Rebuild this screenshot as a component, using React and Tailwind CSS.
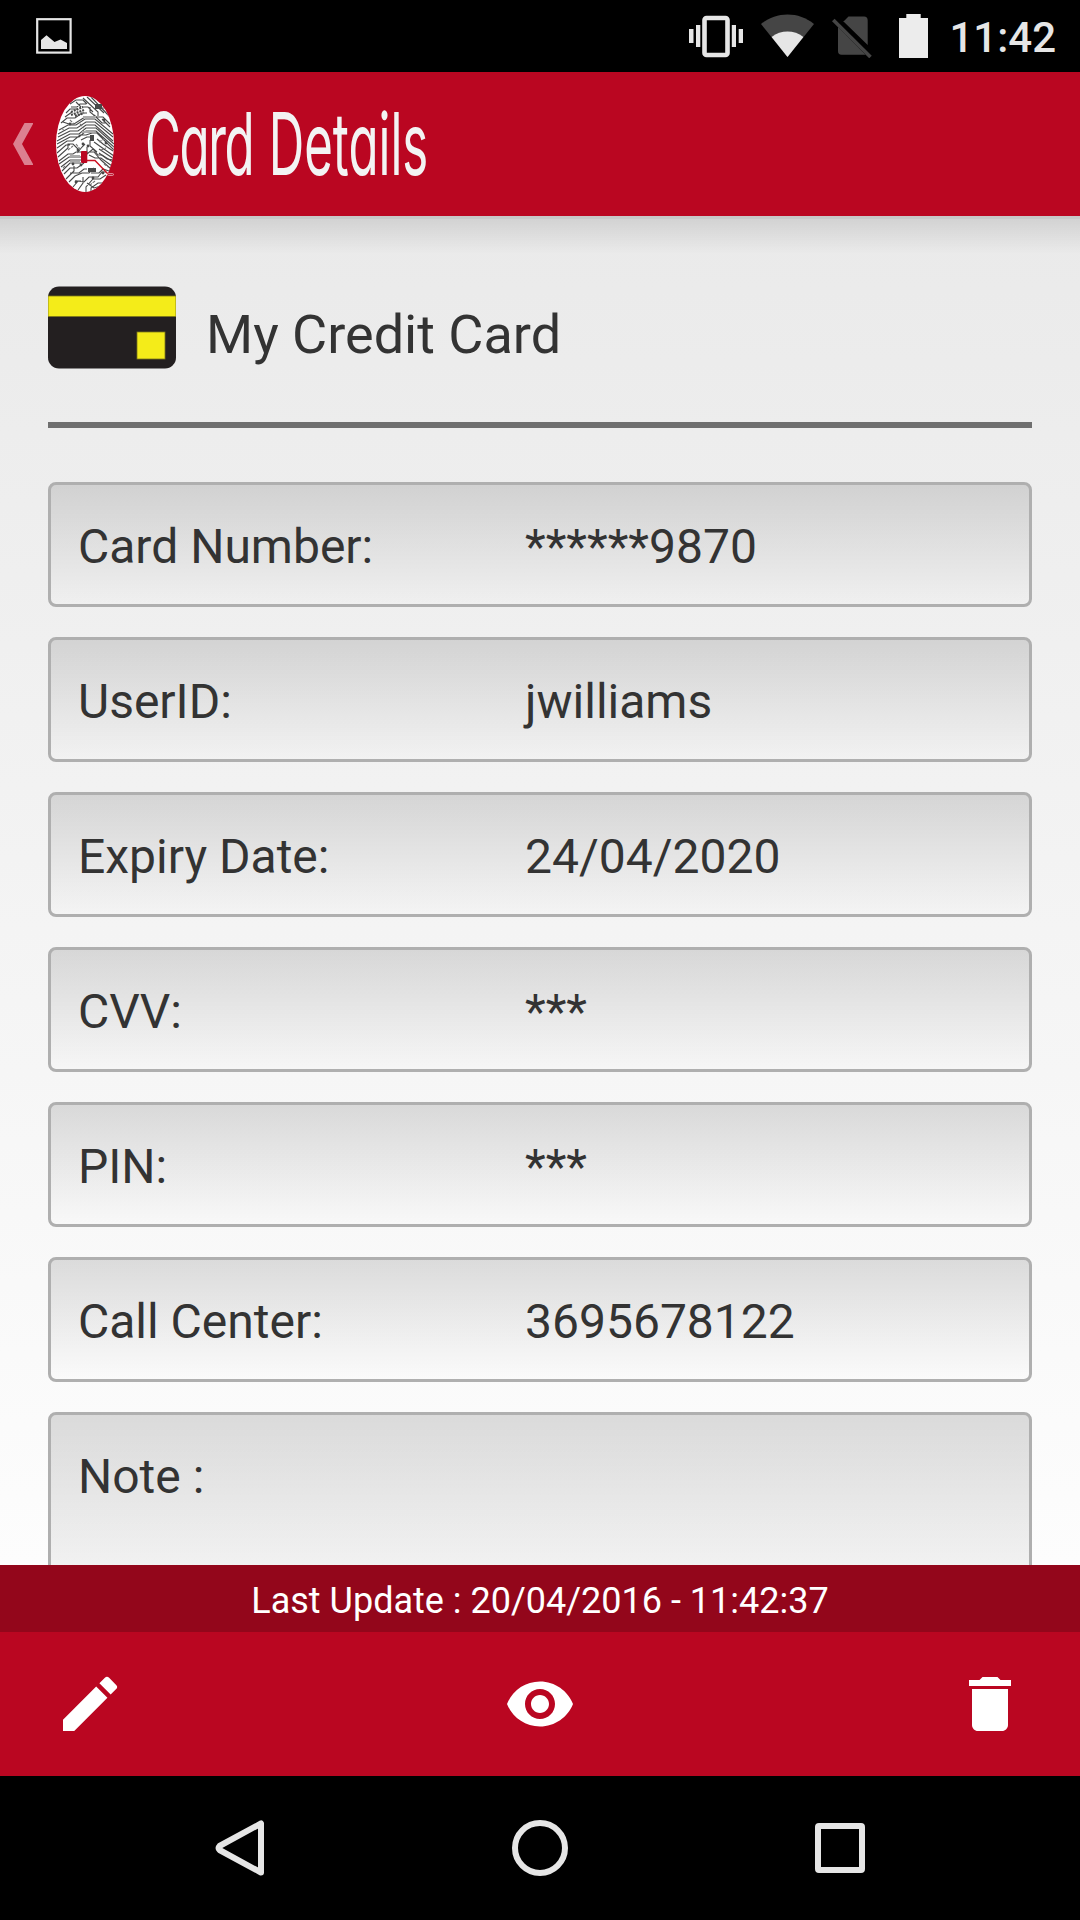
import React from "react";
import { MdEdit, MdVisibility, MdDelete } from "react-icons/md";

const fields = [
  { label: "Card Number:", value: "******9870" },
  { label: "UserID:", value: "jwilliams" },
  { label: "Expiry Date:", value: "24/04/2020" },
  { label: "CVV:", value: "***" },
  { label: "PIN:", value: "***" },
  { label: "Call Center:", value: "3695678122" },
];

function StatusBar() {
  return (
    <div className="h-[72px] shrink-0 bg-black flex items-center justify-between pl-9 pr-[24px]">
      <svg width="36" height="36" viewBox="0 0 36 36">
        <rect x="1.2" y="1.2" width="33.4" height="33.4" fill="none" stroke="#e6e6e6" strokeWidth="2.2" />
        <path d="M5 31V22L10.5 17.3L18.5 24L24.5 21.5L31 25V31Z" fill="#e6e6e6" />
      </svg>
      <div className="flex items-center">
        {/* vibrate */}
        <svg width="54" height="44" viewBox="0 0 54 44">
          <rect x="15.5" y="4" width="23" height="37" rx="2" fill="none" stroke="#e6e6e6" strokeWidth="4.6" />
          <path d="M0 15h4.5v14H0zM7 11h4.3v22H7zM42.8 11H47v22h-4.2zM49.7 15H54v14h-4.3z" fill="#e6e6e6" />
        </svg>
        {/* wifi */}
        <svg className="ml-[18px]" width="53" height="44" viewBox="0 0 53 44">
          <path d="M0 10C7.5 3.8 17 0.5 26.5 0.5S45.5 3.8 53 10L26.5 43Z" fill="#454545" />
          <path d="M10.6 23C20 15.8 33 15.8 42.4 23L26.5 43Z" fill="#e6e6e6" />
        </svg>
        {/* no sim */}
        <svg className="ml-[18px]" width="40" height="44" viewBox="0 0 40 44">
          <path d="M11 8L16.5 2.5H32Q35.7 2.5 35.7 6.5V31L11 7ZM6 13L33.5 40.8H9.5Q6 40.8 6 37Z" fill="#454545" />
          <path d="M1.3 6L38.5 43" stroke="#454545" strokeWidth="3.6" />
        </svg>
        {/* battery */}
        <svg className="ml-[27px]" width="29" height="44" viewBox="0 0 29 44">
          <path d="M7.3 0h14.4v4H29v40H0V4h7.3z" fill="#ececec" />
        </svg>
        <span className="ml-[21px] pt-[3px] text-[42px] leading-[69px] font-medium text-[#e6e6e6]">
          11:42
        </span>
      </div>
    </div>
  );
}

function FingerprintLogo() {
  return (
    <svg width="60" height="98" viewBox="0 0 60 98">
      <defs>
        <clipPath id="print">
          <ellipse cx="29" cy="49" rx="29" ry="48" />
        </clipPath>
      </defs>
      <ellipse cx="29" cy="49" rx="29" ry="48" fill="#fff" />
      <g clipPath="url(#print)" fill="none" stroke="#484848" strokeWidth="1.1">
        {/* top traces */}
        <path d="M14 9L20 5H27L31 9M15 12H21L24 9H30M27 3L42 17V21M31 2L48 18M35 2L54 22M10 18L14 14H22M20 7L25 12M26 12H32L37 17M9 22L16 17M34 12V17L40 22H47L54 29" />
        <path d="M5 28L11 23H19L26 18H31M7 27L13 29H18L29 22M38 20L46 28H50M43 13H49M46 24L54 32" />
        {/* ridges */}
        <path d="M3 35L12 30H20L29 24H39L57 39M2 39L13 33H21L30 27H39L57 42M2 42L14 36H22L30 30H39L57 46M1 46L14 39H23L30 33H40L58 49M1 49L14 42H23L30 36H40L58 52M1 53L11 46H17L24 40H30L36 38H41L58 55" />
        <path d="M1 58L10 50H14M2 62L12 53V49H17L22 54V57L26 52L29 49M25 45L31 42H35M38 47L45 52L58 61M41 44L47 49L57 56M34 45V51L41 57M31 52V59L37 54L42 60H46L57 67M43 54L58 64" />
        <path d="M3 66L12 59H17L20 57H26M3 69L13 62H25M5 72L14 65H25M6 76L14 68H25M33 60L39 63H45L56 71M34 57H38L45 65L55 74M43 58L51 64L58 65" />
        {/* lower traces */}
        <path d="M8 79L14 73H21L28 68M10 84L18 76V71M14 78H23L28 74H31M13 87L19 81L26 78H33L38 73M17 92L22 86L28 87L33 82H42L46 77H50M22 95L27 88V82M30 97V92L37 84H44L50 80M35 97V93L42 88H47M31 88L38 93L45 91M19 86H25M35 78H43L47 74L53 76" />
        <path d="M6 33L8 36M14 25L18 29M24 29L28 33M42 34L47 39M12 55L17 51M20 49L24 54M45 55L50 53M43 47L48 44M7 73L10 70M39 86L34 90M48 69L52 72" stroke="#777" strokeDasharray="3 1" />
        <path d="M15 17L27 12M15 20L28 15M19 21L28 18" strokeWidth="2.2" strokeDasharray="2 1" />
        <path d="M27 22H40M26 37H38M14 61H24M14 67H24" stroke="#aaa" strokeWidth="2" />
      </g>
      <g fill="#484848">
        <path d="M39 9h7v5h-7zM34 40h4v6h-4zM32 73h8v4h-8z" />
        <circle cx="22" cy="55" r="1.4" />
        <circle cx="27" cy="49" r="1.4" />
        <circle cx="14" cy="29" r="1.4" />
        <circle cx="48" cy="25" r="1.4" />
        <circle cx="20" cy="87" r="1.4" />
        <circle cx="37" cy="83" r="1.4" />
        <circle cx="47" cy="78" r="1.4" />
        <circle cx="17" cy="69" r="1.4" />
        <circle cx="25" cy="70" r="1.4" />
        <circle cx="32" cy="51" r="1.4" />
        <circle cx="50" cy="48" r="1.4" />
      </g>
      <rect x="25" y="56" width="6.3" height="12" rx="1" fill="#ba0621" />
      <path d="M31 65.5H39L52 79" fill="none" stroke="#cc1020" strokeWidth="1.4" />
      <rect x="51.5" y="78.6" width="6" height="1.8" rx="0.9" fill="#ba0621" stroke="#eebcc4" strokeWidth="0.8" />
    </svg>
  );
}

function Header() {
  return (
    <div className="h-36 shrink-0 bg-[#ba0621] flex items-center pl-[13px]">
      <svg width="20" height="42" viewBox="0 0 20 42">
        <path d="M11.5 0H20.5L9 21L20.5 42H11.5L0 21Z" fill="#dc8090" />
      </svg>
      <div className="ml-[23px]">
        <FingerprintLogo />
      </div>
      <h1 className="ml-[29px] w-[300px] origin-left scale-x-[0.565] whitespace-nowrap text-[87px] leading-[144px] font-normal text-[#f3f3f3] [word-spacing:3px] font-['Inter',sans-serif] [font-feature-settings:'cv11']">
        <span className="tracking-[-2.5px]">Card</span> Details
      </h1>
    </div>
  );
}

function CardIcon() {
  return (
    <svg width="128" height="83" viewBox="0 0 128 83">
      <rect y="0.5" width="128" height="82" rx="11" fill="#231f20" />
      <rect y="10" width="128" height="20.5" fill="#f4ec19" stroke="#7d7818" strokeWidth="0.8" />
      <rect x="89" y="46" width="28" height="27" fill="#f4ec19" stroke="#7d7818" strokeWidth="0.8" />
    </svg>
  );
}

function FieldRow({ label, value }) {
  return (
    <div className="h-[125px] shrink-0 flex items-center rounded-lg border-3 border-[#afafaf] bg-linear-to-b from-black/12 to-black/0 px-[27px] pt-[4px] text-[48px]">
      <div className="w-[447px]">{label}</div>
      <div>{value}</div>
    </div>
  );
}

export default function App() {
  return (
    <div className="w-[1080px] h-[1920px] flex flex-col overflow-hidden bg-black text-[#333333] font-['Roboto',sans-serif]">
      <StatusBar />
      <Header />

      <div className="flex-1 min-h-0 overflow-hidden bg-linear-to-b from-[#eaeaea] to-[#fdfdfd]">
        <div className="h-[38px] border-t-3 border-black/4 bg-linear-to-b from-black/11 to-transparent bg-origin-border" />

        <div className="px-12">
          <div className="h-[174px] flex border-b-6 border-[#6f6f6f] pt-8">
            <CardIcon />
            <div className="ml-[30px] pt-[17px] text-[54px] leading-[64px]">
              My Credit Card
            </div>
          </div>

          <div className="mt-[54px] flex flex-col gap-[30px]">
            {fields.map((field) => (
              <FieldRow key={field.label} label={field.label} value={field.value} />
            ))}
            <div className="h-[240px] rounded-lg border-3 border-[#afafaf] bg-linear-to-b from-black/13 to-black/0 px-[27px] pt-[34px] text-[48px] leading-[56px]">
              Note :
            </div>
          </div>
        </div>
      </div>

      <div className="h-[67px] shrink-0 bg-[#93061b] text-center text-[36px] leading-[72px] text-white">
        Last Update : 20/04/2016 - 11:42:37
      </div>

      <div className="h-36 shrink-0 bg-[#ba0621] flex items-center justify-between px-[54px] text-white">
        <button>
          <MdEdit size={72} />
        </button>
        <button>
          <MdVisibility size={72} />
        </button>
        <button>
          <MdDelete size={72} />
        </button>
      </div>

      {/* Navigation bar */}
      <div className="h-36 shrink-0 bg-black flex items-center justify-between px-[210px]">
        <svg width="60" height="60" viewBox="0 0 60 60" fill="none" stroke="#e6e6e6" strokeWidth="6" strokeLinejoin="round">
          <path d="M51 5.5V54.5L9.5 32Q7.5 30 9.5 28Z" />
        </svg>
        <svg width="60" height="60" viewBox="0 0 60 60" fill="none" stroke="#e6e6e6" strokeWidth="6">
          <circle cx="30" cy="30" r="25" />
        </svg>
        <svg width="60" height="60" viewBox="0 0 60 60" fill="none" stroke="#e6e6e6" strokeWidth="6">
          <rect x="8" y="8" width="44" height="44" rx="1" />
        </svg>
      </div>
    </div>
  );
}
